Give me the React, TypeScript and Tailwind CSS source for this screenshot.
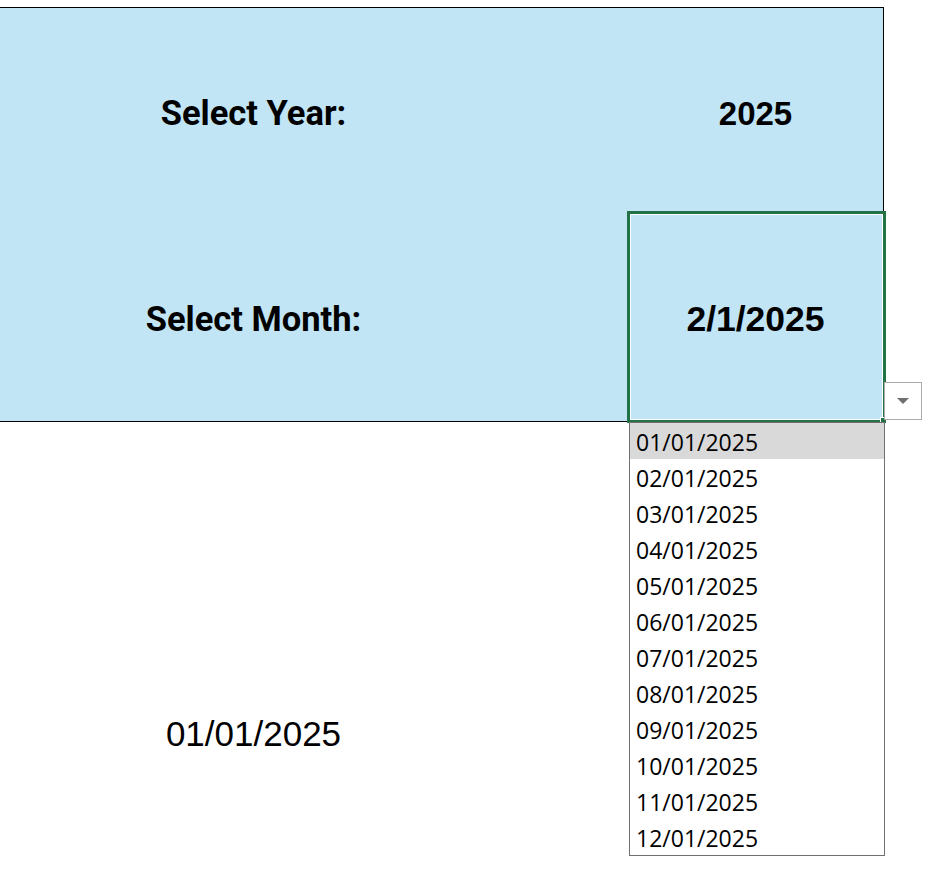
const MONTHS = Array.from({ length: 12 }, (_, i) => `${String(i + 1).padStart(2, '0')}/01/2025`);

export default function App() {
  return (
    <div className="relative w-[936px] h-[877px] bg-white overflow-hidden">
      <div className="pt-[7px]">
        <div className="w-[884px] h-[415px] border-t border-r border-b border-black bg-[#c1e5f5] grid grid-cols-[507px_121px_255px] grid-rows-[204px_209px] font-['Roboto',sans-serif] font-bold text-black">
          <div className="flex items-center justify-center pt-[7px] text-[34.5px]">Select Year:</div>
          <div />
          <div className="flex items-center justify-center pt-[7px] font-['Liberation_Sans',Arial,sans-serif] text-[33px]">2025</div>
          <div className="flex items-center justify-center pt-[7px] text-[34.5px]">Select Month:</div>
          <div />
          <div className="flex items-center justify-center pt-[7px] font-['Liberation_Sans',Arial,sans-serif] text-[35.5px]">2/1/2025</div>
        </div>
        <div className="w-[507px] mt-[292px] text-center font-['Liberation_Sans',Arial,sans-serif] text-[35px] leading-[40px] text-black">
          01/01/2025
        </div>
      </div>

      {/* active cell selection */}
      <div className="absolute left-[627px] top-[211px] w-[259px] h-[212px] border-[3px] border-[#217346] pointer-events-none">
        <div className="w-full h-full border border-white" />
      </div>
      <div className="absolute left-[880px] top-[417px] w-[7px] h-[7px] bg-[#217346] border border-white" />

      {/* dropdown arrow button */}
      <div className="absolute left-[884px] top-[382px] w-[38px] h-[38px] bg-white border border-[#ababab] flex items-center justify-center">
        <svg width="12" height="7" viewBox="0 0 12 7">
          <path d="M0 0 H12 L6 6 Z" fill="#707070" />
        </svg>
      </div>

      {/* dropdown list */}
      <div className="absolute left-[629px] top-[422px] w-[256px] h-[434px] bg-white border border-[#707070] font-['Open_Sans',sans-serif] text-[23px] text-black">
        {MONTHS.map((m, i) => (
          <div
            key={m}
            className={`h-[36px] leading-[36px] pt-px pl-[6px] ${i === 0 ? 'bg-[#d9d9d9]' : ''}`}
          >
            {m}
          </div>
        ))}
      </div>
    </div>
  );
}
